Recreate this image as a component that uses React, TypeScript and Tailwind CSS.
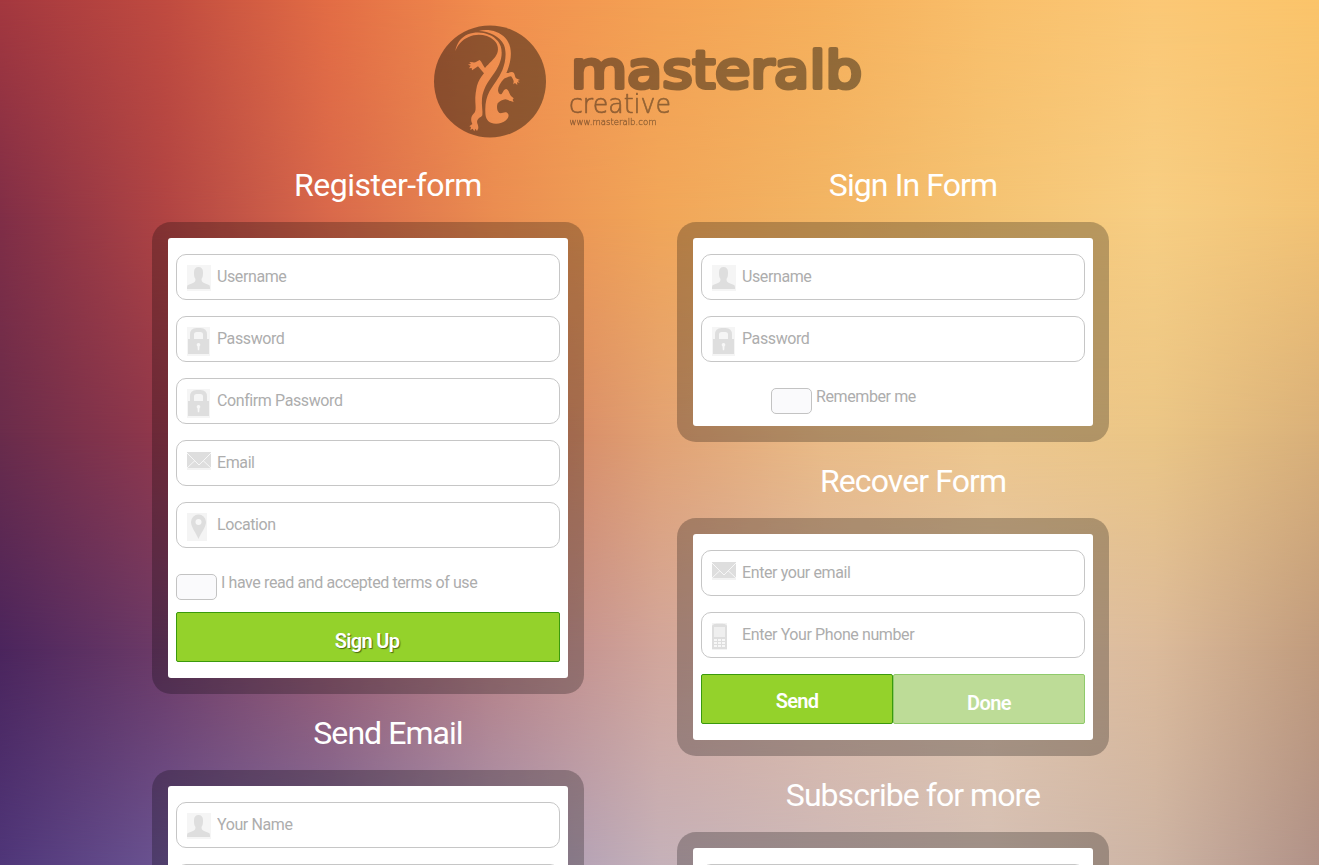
import type { ReactNode } from 'react';

/* Backdrop: horizontal colour ramps, cross-faded from one row to the next. */
const RAMPS: string[][] = [
  ['#a4383f', '#c04b40', '#e36d45', '#f28f4e', '#f4a254', '#f6b05c', '#f9bf6b', '#fbc876', '#fbc46a'],
  ['#802e47', '#b04443', '#d9694b', '#ea8d51', '#f1a659', '#f2b564', '#f4c373', '#f7ce83', '#f2c274'],
  ['#6a2c4b', '#92384b', '#b85350', '#d07b5e', '#e2a273', '#eabb86', '#eec78d', '#ebc686', '#d9b079'],
  ['#4b255d', '#6d3b67', '#985c72', '#b98286', '#d2a69b', '#dcb9a5', '#e0c4ab', '#dcbb9b', '#c09b7d'],
  ['#4f3679', '#6b5492', '#7d6d9f', '#a594b2', '#c5b1b9', '#ceb9b8', '#d5c0b5', '#cdb4a4', '#b09187'],
];

function Backdrop() {
  return (
    <div className="absolute inset-0" aria-hidden="true">
      {RAMPS.map((colors, i) => {
        const fade =
          i === 0 ? undefined : `linear-gradient(180deg, transparent ${(i - 1) * 25}%, #000 ${i * 25}%)`;
        return (
          <div
            key={i}
            className="absolute inset-0"
            style={{ background: `linear-gradient(90deg, ${colors.join(', ')})`, maskImage: fade }}
          />
        );
      })}
    </div>
  );
}

function Logo() {
  return (
    <svg className="block h-[116px] w-[440px]" viewBox="430 23 440 116" role="img" aria-label="masteralb creative">
      <defs>
        <mask id="lizard" maskUnits="userSpaceOnUse" x="430" y="23" width="120" height="116">
          <rect x="430" y="23" width="120" height="116" fill="#fff" />
          <g transform="translate(425 20) scale(.33333)" fill="#000">
            <path d="M91 94C94 72 107 52 129 43C158 32 197 37 219 64C226 73 230 84 230 98C230 122 219 145 202 167C188 186 174 208 171 235C169 256 174 274 172 286C168 293 160 293 157 301C154 309 161 316 160 325L156 333L151 326L148 334L143 326L136 330L138 321L133 319L142 312C138 303 136 292 145 282C154 275 152 262 151 245C150 227 153 211 156 197C160 183 168 170 177 160L166 147L159 139L148 146L141 151L140 144L132 145L137 137L129 134L138 131L133 126L144 127C151 130 157 122 164 120C171 126 174 137 180 144C190 131 211 116 217 99C222 85 217 70 207 61C187 43 155 40 131 51C110 60 98 75 91 94Z" />
            <path d="M162 33C187 26 221 33 241 54C259 74 260 101 255 125C252 139 248 150 244 159C252 160 260 153 266 158C271 164 269 173 276 176L285 180L278 182L284 188L276 187L277 195L270 189L265 193L266 183C264 177 261 172 258 169C251 169 244 173 237 176C227 187 219 199 219 211C220 220 225 225 230 222C235 216 235 209 244 207C251 210 253 220 258 228L266 235L263 239L266 246L257 243C249 242 246 238 241 238C233 240 224 243 218 250C214 260 216 273 223 279C232 281 237 275 244 277C254 282 252 293 243 301C231 311 211 314 198 308C185 302 181 291 181 275C180 253 184 231 194 213C205 195 222 175 232 151C241 128 246 100 237 75C224 48 191 34 162 33Z" />
          </g>
        </mask>
      </defs>
      <g opacity="0.4">
        <circle cx="490" cy="81.5" r="56" mask="url(#lizard)" />
        <text
          x="571"
          y="88"
          fontFamily="DejaVu Sans, sans-serif"
          fontSize="52"
          textLength="291"
          lengthAdjust="spacingAndGlyphs"
          stroke="#000"
          strokeWidth="4.2"
          strokeLinejoin="round"
          strokeLinecap="round"
        >
          masteralb
        </text>
        <text
          x="569"
          y="113"
          fontFamily="DejaVu Sans Light, DejaVu Sans, sans-serif"
          fontWeight="200"
          fontSize="26"
          textLength="102"
          lengthAdjust="spacingAndGlyphs"
          stroke="#000"
          strokeWidth="0.7"
          strokeLinejoin="round"
        >
          creative
        </text>
        <text
          x="569.5"
          y="125"
          fontFamily="DejaVu Sans Light, DejaVu Sans, sans-serif"
          fontWeight="200"
          fontSize="9.5"
          textLength="87"
          lengthAdjust="spacingAndGlyphs"
          stroke="#000"
          strokeWidth="0.35"
        >
          www.masteralb.com
        </text>
      </g>
    </svg>
  );
}

function UserIcon() {
  return (
    <svg className="mt-[10px] h-[26px] w-6" viewBox="0 0 24 26">
      <rect width="24" height="26" fill="#f5f5f5" />
      <path d="M11.500 2C8.500 2 7 4 7 7c0 3 0 5 1.500 7 0 2-.5 3-2.500 4l-5 2c-1 .6-1 2-1 4h23c0-2 0-3.400-1-4l-5-2c-2-1-2.500-2-2.500-4C16 12 16 10 16 7c0-3-1.500-5-4.500-5Z" fill="#dedede" />
    </svg>
  );
}

function LockIcon() {
  return (
    <svg className="mt-[10px] h-[29px] w-[23px]" viewBox="0 0 23 29">
      <rect width="23" height="29" fill="#f5f5f5" />
      <path d="M5 13V7.500Q5 3 9.500 3h4Q18 3 18 7.500V13" fill="none" stroke="#dedede" strokeWidth="4" />
      <rect x="1" y="12" width="21" height="15" fill="#dedede" />
      <path d="M11.500 16a1.800 1.800 0 0 1 1 3.300l-.3 4h-1.400l-.3-4a1.800 1.800 0 0 1 1-3.300Z" fill="#f7f7f7" />
    </svg>
  );
}

function MailIcon() {
  return (
    <svg className="mt-[11px] h-[18px] w-6" viewBox="0 0 24 18">
      <rect width="24" height="18" fill="#f3f3f3" />
      <rect width="24" height="16" fill="#dedede" />
      <path d="M0 1l8 8 4 4 4-4 8-8M0 16l8-7.500M24 16l-8-7.500" fill="none" stroke="#f7f7f7" strokeWidth="1" />
    </svg>
  );
}

function PinIcon() {
  return (
    <svg className="mt-[10px] h-7 w-5" viewBox="0 0 20 28">
      <rect width="20" height="28" fill="#f4f4f4" />
      <path d="M11.500 26C9 20 4 14 4 9a7.300 7.300 0 0 1 15 0c0 5-5 11-7.500 17Z" fill="#dedede" />
      <circle cx="11.500" cy="9" r="3" fill="#f7f7f7" />
    </svg>
  );
}

function PhoneIcon() {
  return (
    <svg className="mt-[10px] h-[27px] w-[15px]" viewBox="0 0 15 27">
      <rect width="15" height="27" fill="#f3f3f3" />
      <path d="M0 3C1 1 3 .8 7.500.8S14 1 15 3v23H0Z" fill="#dedede" />
      <rect x="2" y="4" width="11" height="10" fill="#efefef" />
      <path d="M2 16h3v2H2zM6 16h3v2H6zM10 16h3v2h-3zM2 19h3v2H2zM6 19h3v2H6zM10 19h3v2h-3zM2 22h3v2H2zM6 22h3v2H6zM10 22h3v2h-3z" fill="#f7f7f7" />
    </svg>
  );
}

function Field({ icon, label }: { icon?: ReactNode; label: string }) {
  return (
    <label className="flex h-[46px] shrink-0 rounded-[10px] border border-[#c6c6c6] bg-white pl-[10px]">
      <span className="w-[30px] shrink-0">{icon}</span>
      <input
        placeholder={label}
        className="h-[42px] w-full bg-transparent text-[16px] tracking-[-0.4px] outline-none placeholder:text-[#adadad]"
      />
    </label>
  );
}

function Check({ label, className = '' }: { label: string; className?: string }) {
  return (
    <div className={`flex h-[26px] items-start gap-1 ${className}`}>
      <span className="h-[26px] w-[41px] rounded-[5px] border border-[#c3c3c3] bg-[#fafafc]" />
      <span className="-mt-[1px] text-[16px] leading-5 tracking-[-0.4px] text-[#adadad]">{label}</span>
    </div>
  );
}

function Panel({ title, tracking, children }: { title: string; tracking: string; children: ReactNode }) {
  return (
    <section className="w-[432px] shrink-0">
      <h2 className={`h-[76px] pl-10 text-center text-[32px] leading-[78px] text-white ${tracking}`}>{title}</h2>
      <div className="rounded-[19px] bg-black/25 p-4">
        <form className="flex flex-col gap-4 rounded-[3px] bg-white px-2 py-4">{children}</form>
      </div>
    </section>
  );
}

export default function App() {
  return (
    <div className="relative h-[865px] w-[1319px] overflow-hidden font-[Roboto,sans-serif]">
      <Backdrop />
      <main className="relative">
        <header className="h-[146px] pt-[23px] pl-[430px]">
          <Logo />
        </header>
        <div className="flex items-start gap-[93px] pl-[152px]">
          <div>
            <Panel title="Register-form" tracking="tracking-[-0.5px]">
              <Field icon={<UserIcon />} label="Username" />
              <Field icon={<LockIcon />} label="Password" />
              <Field icon={<LockIcon />} label="Confirm Password" />
              <Field icon={<MailIcon />} label="Email" />
              <Field icon={<PinIcon />} label="Location" />
              <Check className="mt-[10px] -mb-1" label="I have read and accepted terms of use" />
              <button
                type="button"
                className="h-[50px] rounded-[2px] border border-[#3a9a0c] bg-[#94d22b] pt-2 pr-0.5 text-[20px] font-semibold tracking-[-0.7px] text-white [text-shadow:1px_1px_1px_#4a6a10]"
              >
                Sign Up
              </button>
            </Panel>
            <Panel title="Send Email" tracking="tracking-[-0.95px]">
              <Field icon={<UserIcon />} label="Your Name" />
              <Field icon={<MailIcon />} label="Your Email" />
            </Panel>
          </div>
          <div>
            <Panel title="Sign In Form" tracking="tracking-[-0.9px]">
              <Field icon={<UserIcon />} label="Username" />
              <Field icon={<LockIcon />} label="Password" />
              <Check className="mt-[10px] -mb-1 pl-[70px]" label="Remember me" />
            </Panel>
            <Panel title="Recover Form" tracking="tracking-[-0.9px]">
              <Field icon={<MailIcon />} label="Enter your email" />
              <Field icon={<PhoneIcon />} label="Enter Your Phone number" />
              <div className="grid h-[50px] grid-cols-2">
                <button
                  type="button"
                  className="rounded-[2px] border border-[#3a9a0c] bg-[#94d22b] pt-1 text-[20px] font-semibold tracking-[-0.7px] text-white"
                >
                  Send
                </button>
                <button
                  type="button"
                  className="rounded-[2px] border border-[#8fca6b] bg-[#bddc97] pt-2 text-[20px] font-semibold tracking-[-0.6px] text-white"
                >
                  Done
                </button>
              </div>
            </Panel>
            <Panel title="Subscribe for more" tracking="tracking-[-0.95px]">
              <Field icon={<MailIcon />} label="Enter your email" />
            </Panel>
          </div>
        </div>
      </main>
    </div>
  );
}
